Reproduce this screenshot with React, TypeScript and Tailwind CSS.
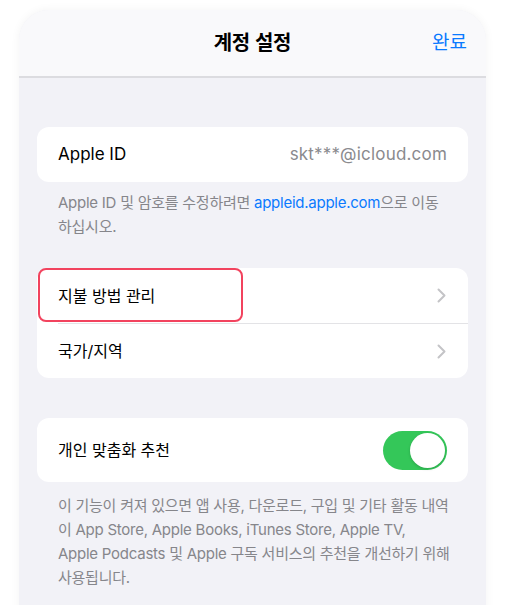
const font = "font-['Inter','Noto_Sans_CJK_KR',sans-serif]";

const Chevron = () => (
  <svg width="9" height="15" viewBox="0 0 9 15" fill="none">
    <path d="M1.5 1.5L7.5 7.5L1.5 13.5" stroke="#c4c4c7" strokeWidth="2" strokeLinecap="round" strokeLinejoin="round" />
  </svg>
);

const Toggle = () => (
  <div className="w-[64px] h-[39px] rounded-full bg-[#34c759] p-[2px] flex justify-end">
    <div className="w-[35px] h-[35px] rounded-full bg-white shadow-[0_1px_3px_rgba(0,0,0,0.18)]" />
  </div>
);

export default function App() {
  return (
    <div className={`w-full h-[605px] bg-white overflow-hidden pt-[10px] pl-[19px] pr-[20px] ${font}`}>
      <div className="h-[620px] rounded-t-[30px] bg-[#f2f2f7] overflow-hidden shadow-[0_0_10px_rgba(0,0,0,0.05)]">
        {/* header */}
        <div className="h-[68px] bg-[#f9f9fb] border-b-2 border-[#dcdce0] relative flex items-center justify-center">
          <h1 className="text-[20px] font-semibold text-black tracking-[-0.2px]">계정 설정</h1>
          <span className="absolute right-[19px] top-[19px] text-[19px] text-[#0a7aff]">완료</span>
        </div>

        <div className="px-[18px] pt-[49px]">
          <div className="bg-white rounded-[12px] h-[55px] flex items-center justify-between px-[21px]">
            <span className="text-[17px] text-black">Apple ID</span>
            <span className="text-[17px] text-[#8a8a8e] tracking-[0.2px]">skt***@icloud.com</span>
          </div>
          <div className="px-[21px] pt-[9px] text-[15px] leading-[24px] text-[#86868b] tracking-[-0.25px] whitespace-nowrap">
            <div>
              Apple ID 및 암호를 수정하려면 <span className="text-[#0a7aff]">appleid.apple.com</span>으로 이동
            </div>
            <div>하십시오.</div>
          </div>

          <div className="mt-[29px] bg-white rounded-[12px] relative">
            <div className="h-[55px] flex items-center justify-between pl-[21px] pr-[22px]">
              <span className="text-[16px] text-black">지불 방법 관리</span>
              <Chevron />
            </div>
            <div className="ml-[21px] h-px bg-[#e3e3e6]" />
            <div className="h-[54px] flex items-center justify-between pl-[21px] pr-[22px]">
              <span className="text-[16px] text-black">국가/지역</span>
              <Chevron />
            </div>
            <div className="absolute left-[1px] top-0 w-[205px] h-[54px] rounded-[8px] border-2 border-[#f2435e]" />
          </div>

          <div className="mt-[40px] bg-white rounded-[12px] h-[64px] flex items-center justify-between pl-[21px] pr-[21px]">
            <span className="text-[16px] text-black">개인 맞춤화 추천</span>
            <Toggle />
          </div>
          <div className="px-[21px] pt-[12px] text-[15px] leading-[24px] text-[#86868b] tracking-[-0.25px] whitespace-nowrap">
            <div>이 기능이 켜져 있으면 앱 사용, 다운로드, 구입 및 기타 활동 내역</div>
            <div>이 App Store, Apple Books, iTunes Store, Apple TV,</div>
            <div>Apple Podcasts 및 Apple 구독 서비스의 추천을 개선하기 위해</div>
            <div>사용됩니다.</div>
          </div>
        </div>
      </div>
    </div>
  );
}
